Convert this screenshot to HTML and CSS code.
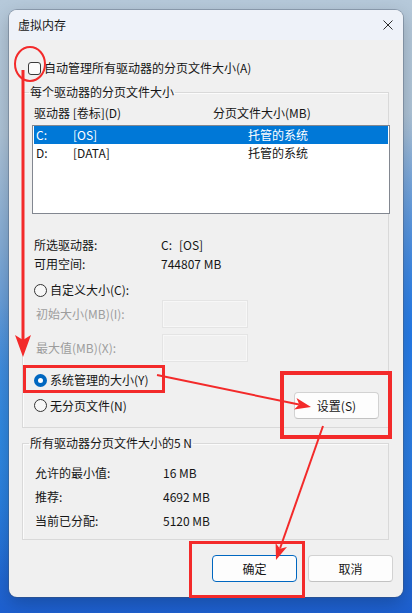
FILE: index.html
```html
<!DOCTYPE html>
<html lang="zh-CN">
<head>
<meta charset="utf-8">
<title>虚拟内存</title>
<link rel="stylesheet" href="styles.css">
</head>
<body>
<div class="desktop">
  <div class="dialog">
    <div class="titlebar">
      <span class="title">虚拟内存</span>
      <svg class="close" viewBox="0 0 10 10" width="10" height="10"><path d="M0.5 0.5L9.5 9.5M9.5 0.5L0.5 9.5" stroke="#2b2b2b" stroke-width="1" fill="none"/></svg>
    </div>
    <div class="content">
      <div class="check-row"><span class="checkbox"></span><span>自动管理所有驱动器的分页文件大小(A)</span></div>

      <fieldset class="group drives">
        <legend>每个驱动器的分页文件大小</legend>
        <div class="col-head"><span>驱动器 [卷标](D)</span><span>分页文件大小(MB)</span></div>
        <div class="listbox">
          <div class="row selected"><span>C:</span><span>[OS]</span><span>托管的系统</span></div>
          <div class="row"><span>D:</span><span>[DATA]</span><span>托管的系统</span></div>
        </div>
        <div class="info">
          <span>所选驱动器:</span><span class="drive-val"><span>C:</span><span>[OS]</span></span>
          <span>可用空间:</span><span>744807 MB</span>
        </div>
        <div class="radio-row custom"><span class="radio"></span><span>自定义大小(C):</span></div>
        <div class="size-row first"><span class="dim">初始大小(MB)(I):</span><span class="input"></span></div>
        <div class="size-row second"><span class="dim">最大值(MB)(X):</span><span class="input"></span></div>
        <div class="radio-row system"><span class="radio checked"></span><span>系统管理的大小(Y)</span></div>
        <div class="set-row">
          <div class="radio-row"><span class="radio"></span><span>无分页文件(N)</span></div>
          <button class="btn">设置(S)</button>
        </div>
      </fieldset>

      <fieldset class="group total">
        <legend>所有驱动器分页文件大小的5 N</legend>
        <div class="totals">
          <span>允许的最小值:</span><span>16 MB</span>
          <span>推荐:</span><span>4692 MB</span>
          <span>当前已分配:</span><span>5120 MB</span>
        </div>
      </fieldset>

      <div class="actions">
        <button class="btn default">确定</button>
        <button class="btn">取消</button>
      </div>
    </div>
  </div>

  <svg class="marks" viewBox="0 0 412 613" width="412" height="613">
    <g fill="none" stroke="#f32a2a">
      <ellipse cx="30" cy="64" rx="15" ry="17" stroke-width="2"/>
      <line x1="23" y1="70" x2="23" y2="342" stroke-width="3"/>
      <rect x="24.5" y="366.5" width="139" height="25" stroke-width="3"/>
      <line x1="157" y1="375" x2="299" y2="404.5" stroke-width="2"/>
      <rect x="282" y="373" width="108" height="64" stroke-width="4"/>
      <line x1="323" y1="426" x2="280" y2="548.5" stroke-width="2"/>
      <rect x="190.5" y="542.5" width="113" height="54" stroke-width="3"/>
    </g>
    <g fill="#f32a2a">
      <polygon points="15,335 23,340 31,335 23,357"/>
      <polygon points="311,407 294.1,409.6 299.3,404.6 296.5,397.9"/>
      <polygon points="276,560 275.6,542.9 280,548.7 287,546.9"/>
    </g>
  </svg>
</div>
</body>
</html>
```

FILE: styles.css
```css
* { box-sizing: border-box; }

html, body {
  margin: 0;
  padding: 0;
}

body {
  width: 412px;
  height: 613px;
  overflow: hidden;
  font-family: "Noto Sans CJK SC", "Noto Sans", sans-serif;
  font-size: 12px;
  line-height: 16px;
  color: #161616;
}

.desktop {
  position: relative;
  width: 412px;
  height: 613px;
  padding: 10px 9px 0 9px;
  background:
    radial-gradient(ellipse 70px 300px at 100% 55%, rgba(30, 120, 235, 0.9), rgba(30, 120, 235, 0) 75%),
    radial-gradient(ellipse 80px 200px at 0% 72%, rgba(40, 140, 230, 0.6), rgba(40, 140, 230, 0) 70%),
    linear-gradient(180deg, #b6c9da 0%, #adc3d7 22%, #84acd6 40%, #4a8edc 60%, #2a78da 82%, #1d5fcf 100%);
}

.dialog {
  width: 394px;
  height: 587px;
  border-radius: 8px;
  overflow: hidden;
  background: #f0f0f0;
  box-shadow: 0 0 0 1px rgba(70, 80, 100, 0.35), 0 6px 18px rgba(0, 0, 0, 0.22);
  display: flex;
  flex-direction: column;
}

.titlebar {
  flex: none;
  height: 30px;
  background: #eef2f9;
  display: flex;
  align-items: center;
  justify-content: space-between;
  padding: 0 10px 0 9px;
}

.close { display: block; }

.content {
  flex: 1;
  padding: 20px 14px 0 13px;
  display: flex;
  flex-direction: column;
}

.check-row {
  display: flex;
  align-items: center;
  gap: 3px;
  padding-left: 6px;
  height: 16px;
}

.checkbox {
  width: 13px;
  height: 13px;
  border: 1px solid #3a3a3a;
  border-radius: 3px;
  background: #fbfbfb;
}

.group {
  margin: 0;
  border: 1px solid #d9d9d9;
  box-shadow: inset 1px 1px 0 #fbfbfb;
  min-width: 0;
}

.group legend {
  padding: 0 1px;
  line-height: 16px;
}

.drives {
  margin-top: 8px;
  padding: 0 0 8px 11px;
}

.drives legend { margin-left: -5px; }

.col-head {
  display: grid;
  grid-template-columns: 179px auto;
  margin-top: 5px;
}

.listbox {
  margin: 4px -2px 0 -2px;
  height: 89px;
  border: 1px solid #828790;
  background: #ffffff;
  padding: 0 1px;
}

.row {
  display: grid;
  grid-template-columns: 37px 175px auto;
  height: 18px;
  line-height: 18px;
  padding-left: 2px;
}

.row.selected {
  background: #0078d7;
  color: #ffffff;
}

.info {
  display: grid;
  grid-template-columns: 127px auto;
  line-height: 19px;
  margin-top: 21px;
}

.drive-val {
  display: flex;
  gap: 7px;
}

.radio-row {
  display: flex;
  align-items: center;
  gap: 3px;
  height: 16px;
}

.radio {
  width: 13px;
  height: 13px;
  border: 1px solid #333333;
  border-radius: 50%;
  background: #f7f7f7;
}

.radio.checked {
  border: 4px solid #0067c0;
  background: #ffffff;
}

.custom { margin-top: 9px; }

.size-row {
  display: grid;
  grid-template-columns: 128px 86px;
  align-items: center;
  height: 28px;
}

.size-row.first { margin-top: 2px; }
.size-row.second { margin-top: 6px; }

.dim {
  color: #9d9d9d;
  padding-left: 2px;
}

.input {
  height: 28px;
  border: 1px solid #e4e4e4;
  box-shadow: inset 0 0 0 1px #f7f7f7;
  background: #f0f0f0;
}

.system { margin-top: 10px; }

.set-row {
  display: flex;
  align-items: center;
  justify-content: space-between;
  height: 27px;
  margin-top: 4px;
  padding-right: 9px;
}

.btn {
  width: 85px;
  height: 27px;
  padding: 0;
  font: inherit;
  color: #161616;
  background: #fdfdfd;
  border: 1px solid #d2d2d2;
  border-bottom-color: #c2c2c2;
  border-radius: 4px;
}

.btn.default {
  border: 1px solid #0067c0;
}

.total {
  margin-top: 7px;
  padding: 10px 0 6px 12px;
}

.total legend { margin-left: -6px; }

.totals {
  display: grid;
  grid-template-columns: 128px auto;
  line-height: 24px;
}

.actions {
  display: flex;
  justify-content: flex-end;
  gap: 11px;
  margin: 15px -4px 0 0;
}

.marks {
  position: absolute;
  left: 0;
  top: 0;
  pointer-events: none;
}
```
